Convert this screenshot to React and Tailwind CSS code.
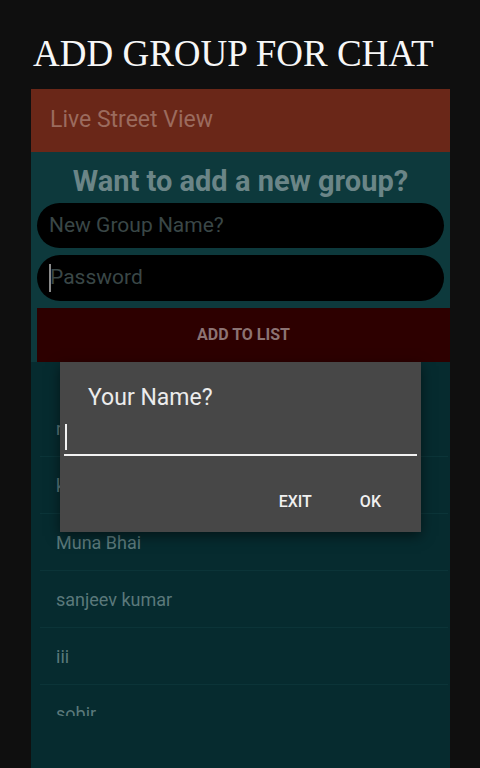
import { useState } from "react";

const groups = ["rahul", "kunal", "Muna Bhai", "sanjeev kumar", "iii", "sobir"];

const App = () => {
    const [name, setName] = useState("");

    return (
        <div className="w-[480px] h-[768px] bg-[#0f0f0f] overflow-hidden flex flex-col" style={{ fontFamily: "Roboto, 'Liberation Sans', sans-serif" }}>
            <h1 className="h-[89px] pl-[33px] pt-[34px] text-[37px] leading-[40px] text-[#f7f7f7]" style={{ fontFamily: "'Liberation Serif', serif" }}>
                ADD GROUP FOR CHAT
            </h1>

            <div className="relative ml-[31px] w-[419px] flex-1 flex flex-col bg-[#062b2f]">
                <div className="h-[63px] bg-[#6a2718] flex items-center pl-[19px] text-[23px] text-[#9b6b5e]">
                    Live Street View
                </div>

                <div className="bg-[#0d393c] flex flex-col">
                    <div className="text-center text-[29px] font-bold text-[#6b8587] leading-[32px] pt-[13px] pb-[6px]">
                        Want to add a new group?
                    </div>
                    <div className="pl-[6px] pr-[6px] flex flex-col gap-[7px]">
                        <div className="h-[45px] rounded-full bg-black flex items-center pl-[12px] text-[21px] text-[#3a4747]">
                            New Group Name?
                        </div>
                        <div className="h-[46px] rounded-full bg-black flex items-center pl-[12px] text-[21px] text-[#3a4747]">
                            <span className="w-[2px] h-[28px] bg-[#8a8a8a] mr-[-1px]" />
                            Password
                        </div>
                    </div>
                    <div className="mt-[7px] ml-[6px] h-[54px] bg-[#2d0000] flex items-center justify-center text-[16px] font-bold text-[#8c7373]">
                        ADD TO LIST
                    </div>
                </div>

                <div className="h-[354px] overflow-hidden pt-[38px] pl-[9px] pr-[2px]">
                    {groups.map((g, i) => (
                        <div key={g} className={"h-[57px] flex items-center pl-[16px] text-[18px] text-[#5b797b] " + (i < groups.length - 1 ? "border-b border-[#0b3438]" : "")}>
                            {g}
                        </div>
                    ))}
                </div>

                <div className="absolute left-[29px] top-[273px] w-[361px] h-[170px] bg-[#474747] shadow-[0_4px_12px_rgba(0,0,0,0.5)] flex flex-col">
                    <div className="pl-[28px] pt-[22px] text-[23px] text-[#ececec] leading-[28px]">Your Name?</div>
                    <div className="mx-[4px] mt-[7px] h-[37px] border-b-[2px] border-[#f2f2f2] flex items-end pb-[4px]">
                        <span className="w-[2px] h-[26px] bg-[#f2f2f2] ml-[1px]" />
                        <input value={name} onChange={(e) => setName(e.target.value)} className="hidden" />
                    </div>
                    <div className="flex justify-end items-center gap-[48px] pr-[40px] mt-[34px] text-[16px] font-medium text-[#f0f0f0]">
                        <span>EXIT</span>
                        <span>OK</span>
                    </div>
                </div>
            </div>
        </div>
    );
};

export default App;
